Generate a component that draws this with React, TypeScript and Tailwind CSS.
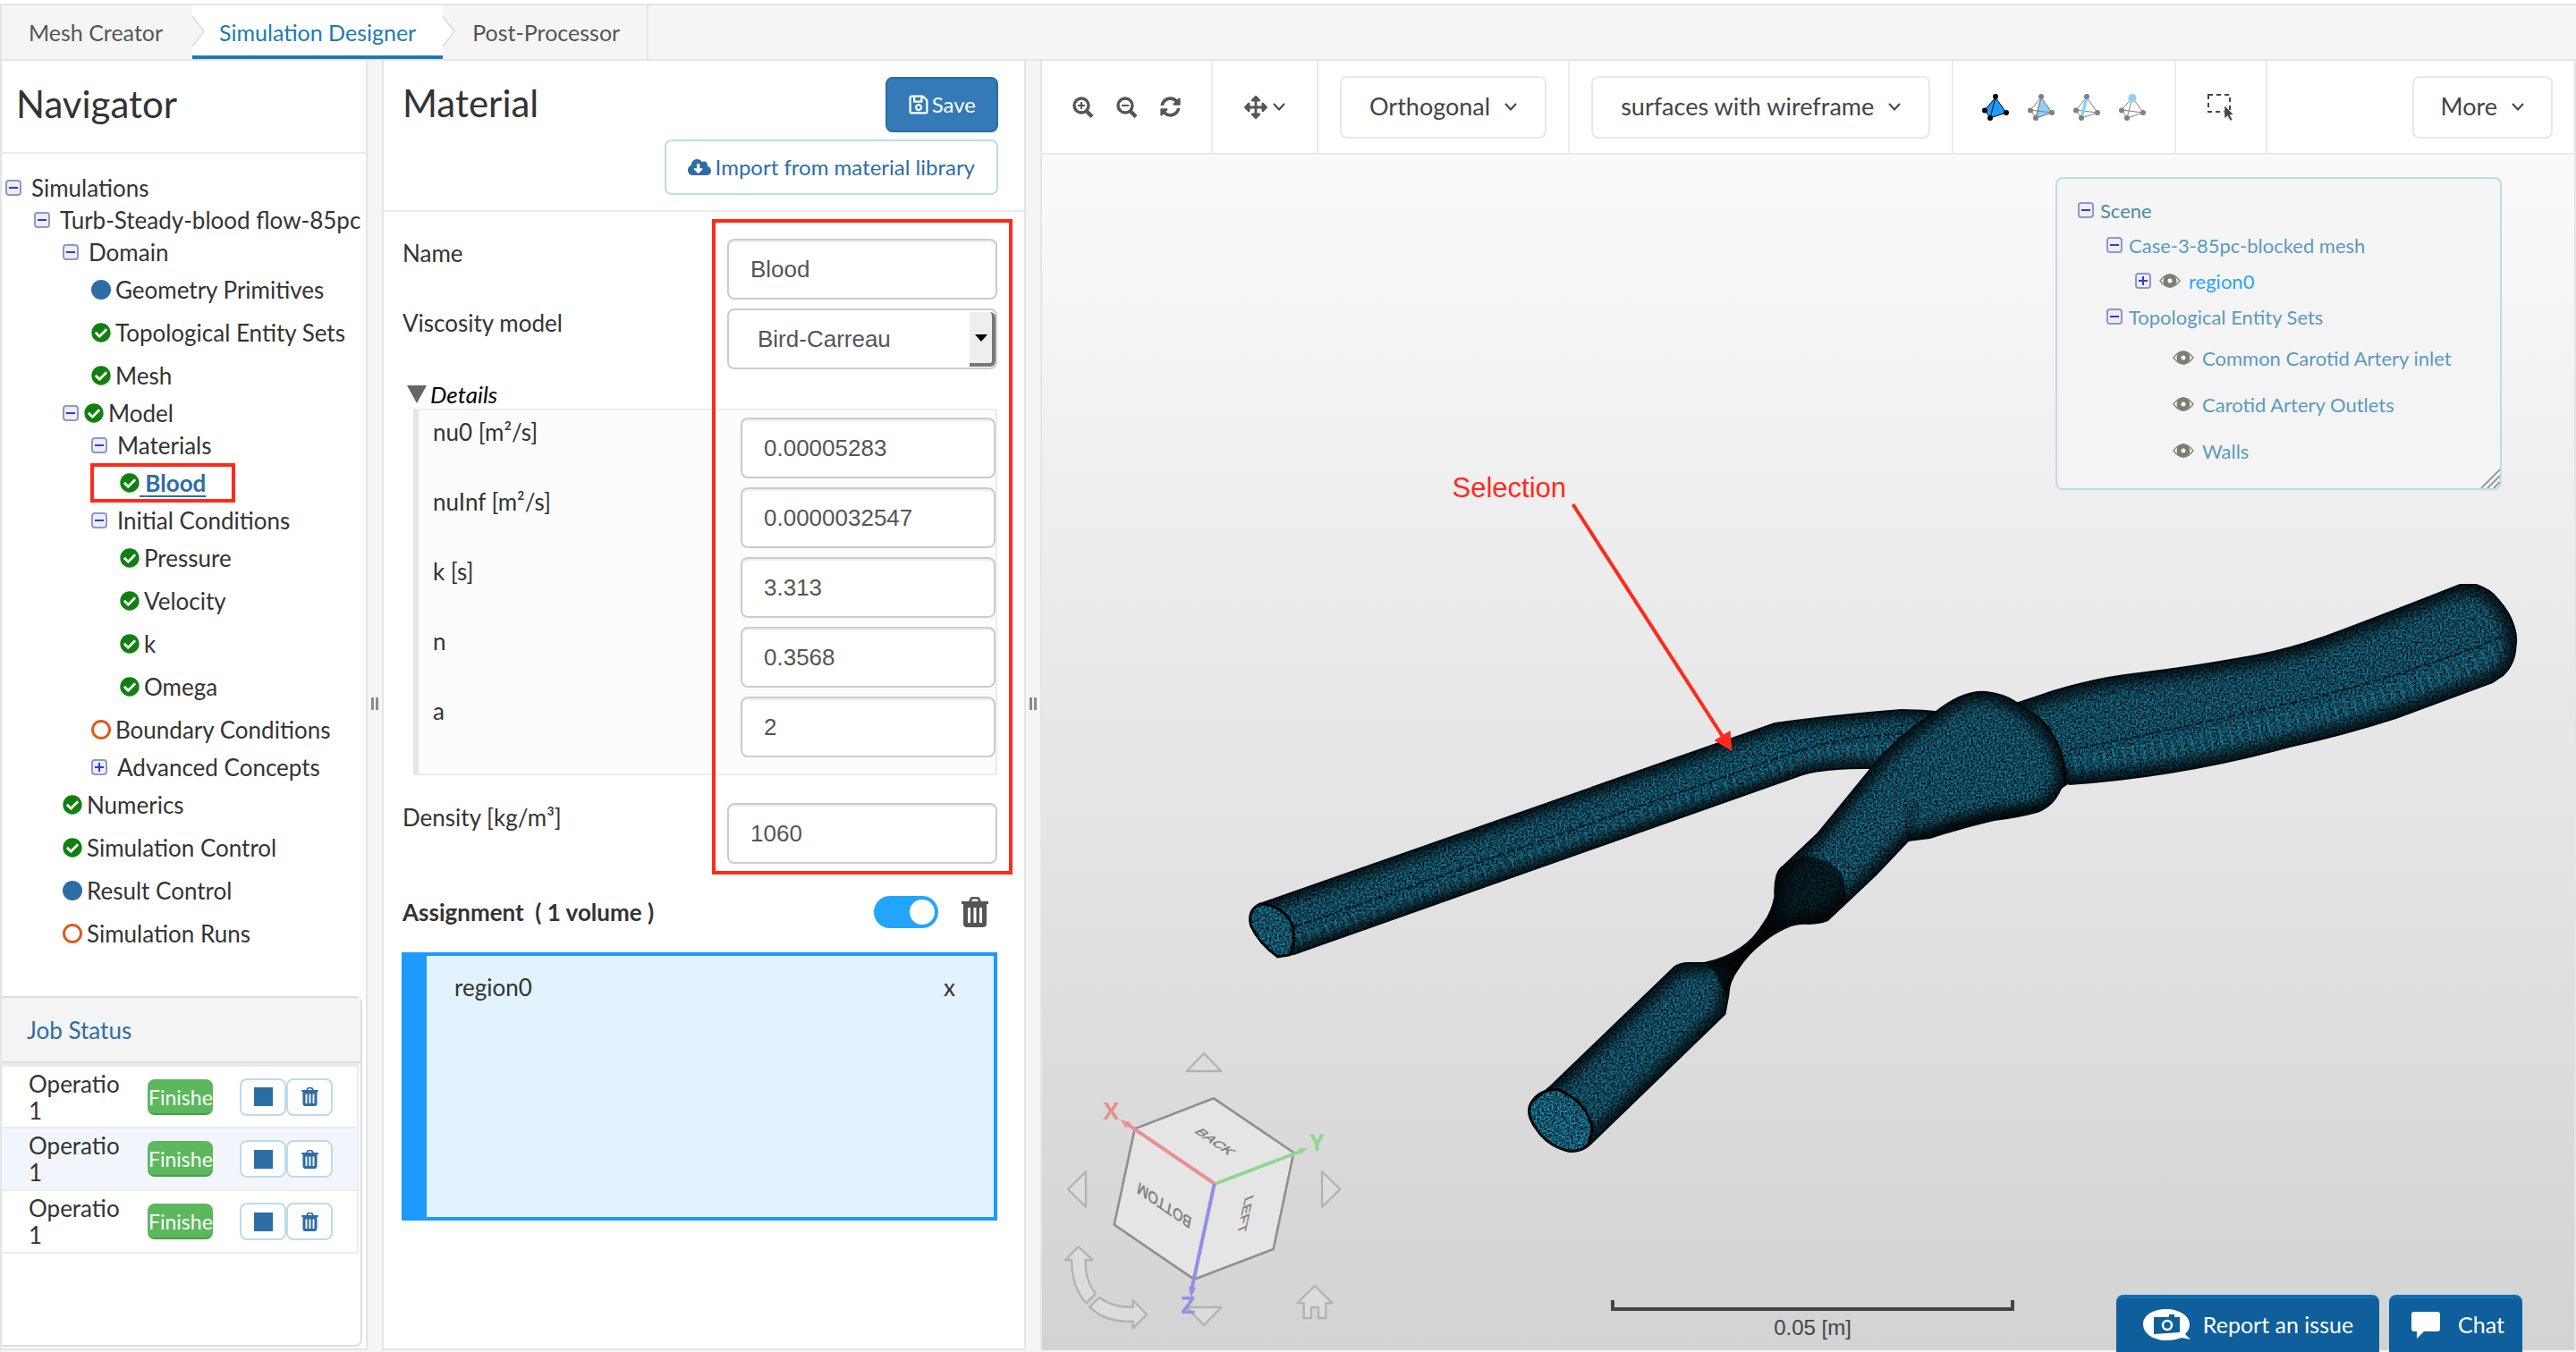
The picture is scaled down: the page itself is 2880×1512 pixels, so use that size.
import type { ReactNode } from "react";
import { FaArrowsAlt, FaCheckCircle, FaCloudDownloadAlt, FaRegSave, FaSyncAlt } from "react-icons/fa";

type TreeItem = {
  label: string;
  level: number;
  toggle?: "minus" | "plus";
  status?: "done" | "info" | "open";
  active?: boolean;
};

const tree: TreeItem[] = [
  { label: "Simulations", level: 0, toggle: "minus" },
  { label: "Turb-Steady-blood flow-85pc", level: 1, toggle: "minus" },
  { label: "Domain", level: 2, toggle: "minus" },
  { label: "Geometry Primitives", level: 3, status: "info" },
  { label: "Topological Entity Sets", level: 3, status: "done" },
  { label: "Mesh", level: 3, status: "done" },
  { label: "Model", level: 2, toggle: "minus", status: "done" },
  { label: "Materials", level: 3, toggle: "minus" },
  { label: "Blood", level: 4, status: "done", active: true },
  { label: "Initial Conditions", level: 3, toggle: "minus" },
  { label: "Pressure", level: 4, status: "done" },
  { label: "Velocity", level: 4, status: "done" },
  { label: "k", level: 4, status: "done" },
  { label: "Omega", level: 4, status: "done" },
  { label: "Boundary Conditions", level: 3, status: "open" },
  { label: "Advanced Concepts", level: 3, toggle: "plus" },
  { label: "Numerics", level: 2, status: "done" },
  { label: "Simulation Control", level: 2, status: "done" },
  { label: "Result Control", level: 2, status: "info" },
  { label: "Simulation Runs", level: 2, status: "open" },
];

const indent = ["pl-1", "pl-9", "pl-17", "pl-25", "pl-33"];

const details = [
  { id: "nu0", label: "nu0 [m²/s]", value: "0.00005283" },
  { id: "nuInf", label: "nuInf [m²/s]", value: "0.0000032547" },
  { id: "k", label: "k [s]", value: "3.313" },
  { id: "n", label: "n", value: "0.3568" },
  { id: "a", label: "a", value: "2" },
];

function Toggle({ kind }: { kind: "minus" | "plus" }) {
  return (
    <button
      aria-label={kind === "minus" ? "Collapse" : "Expand"}
      className="flex size-[18px] shrink-0 items-center justify-center rounded border-2 border-[#8f97cc] bg-[#eceef8]"
    >
      <svg viewBox="0 0 10 10" className="size-[10px]" stroke="#3a36d8" strokeWidth="2">
        <path d="M0 5h10" />
        {kind === "plus" && <path d="M5 0v10" />}
      </svg>
    </button>
  );
}

function Status({ kind }: { kind: "done" | "info" | "open" }) {
  if (kind === "done") return <FaCheckCircle className="size-[22px] shrink-0 text-[#118011]" />;
  if (kind === "info") return <span className="size-[22px] shrink-0 rounded-full bg-[#2e6da4]" />;
  return <span className="size-[22px] shrink-0 rounded-full border-[3px] border-[#de5a1c]" />;
}

function Trash({ className }: { className: string }) {
  return (
    <svg viewBox="0 0 30 34" className={className} fill="currentColor">
      <path
        fillRule="evenodd"
        d="M0 5h8l2-4q.5-1 2-1h6q1.500 0 2 1l2 4h8v3h-2v22q0 4-4 4H6q-4 0-4-4V8H0zM11 5h8l-1.500-2.500h-5zM7 12v17h3V12zm6.500 0v17h3V12zM20 12v17h3V12z"
      />
    </svg>
  );
}

function Chevron() {
  return (
    <svg viewBox="0 0 14 9" className="h-[9px] w-[14px] shrink-0" fill="none" stroke="#444" strokeWidth="2">
      <path d="M1 1l6 6.500L13 1" />
    </svg>
  );
}

function Magnifier({ plus }: { plus?: boolean }) {
  return (
    <svg viewBox="0 0 24 24" className="size-6" fill="none" stroke="#555">
      <circle cx="10" cy="10" r="8" strokeWidth="3.400" />
      <path d="M15.500 16l6.500 6.500" strokeWidth="4.500" />
      <path d="M6 10h8" strokeWidth="2" />
      {plus && <path d="M10 6v8" strokeWidth="2" />}
    </svg>
  );
}

function Tetra({ kind }: { kind: "volume" | "face" | "edge" | "vertex" }) {
  const dot = kind === "volume" ? "#000" : "#808080";
  return (
    <svg viewBox="0 0 30 30" className="size-[30px]" stroke={dot} strokeWidth="1">
      <path d="M15 4L3 18l6 9 18-6z" fill={kind === "volume" ? "#1f9bfb" : "none"} />
      {kind === "face" && <path d="M15 4L9 27l18-6z" fill="#8fd0fb" />}
      <path d={kind === "volume" ? "M15 4L9 27" : "M15 4L9 27M3 18l24 3"} fill="none" />
      {kind === "edge" && <path d="M15 4L9 27" stroke="#8fd0fb" strokeWidth="3.500" />}
      <g fill={dot} stroke="none">
        <circle cx="3" cy="18.500" r="3" />
        <circle cx="9" cy="27" r="3" />
        <circle cx="27" cy="21" r="3" />
        {kind === "vertex" ? <circle cx="15" cy="4.500" r="4.500" fill="#8fd0fb" /> : <circle cx="15" cy="3" r="3" />}
      </g>
    </svg>
  );
}

function Eye() {
  return (
    <svg viewBox="0 0 24 16" className="h-4 w-6 shrink-0">
      <path d="M1 8Q12-6 23 8 12 22 1 8z" fill="#fff" stroke="#85857c" strokeWidth="1.500" />
      <circle cx="12" cy="8" r="5" fill="none" stroke="#7d7d72" strokeWidth="5" />
    </svg>
  );
}

function Field({ id, label, value, nested }: { id: string; label: string; value: string; nested?: boolean }) {
  return (
    <div className="flex justify-between">
      <label htmlFor={id} className="leading-[33px]">
        {label}
      </label>
      <input
        id={id}
        defaultValue={value}
        className={`h-[68px] rounded-lg border-2 border-[#ccc] bg-white px-6 font-['Liberation_Sans',sans-serif] text-[#555] shadow-[inset_0_2px_2px_rgba(0,0,0,0.08)] ${
          nested ? "w-[285px]" : "w-[302px]"
        }`}
      />
    </div>
  );
}

function Navigator() {
  return (
    <aside className="flex w-[411px] shrink-0 flex-col border-x-2 border-b-2 border-[#e5e5e5] bg-white">
      <h1 className="h-[104px] border-b-2 border-[#ececec] px-4 pt-5 text-[42px] leading-[56px]">Navigator</h1>
      <ul className="pt-5">
        {tree.map((item) => (
          <li
            key={item.label}
            className={`relative flex items-center whitespace-nowrap ${item.toggle ? "h-9" : "h-12"} ${indent[item.level]}`}
          >
            {item.toggle && <Toggle kind={item.toggle} />}
            {item.toggle && item.status && <span className="w-[6px] shrink-0" />}
            {item.status && <Status kind={item.status} />}
            {item.active ? (
              <a href="#blood" className="whitespace-pre font-bold text-[#2e6da4] underline underline-offset-4">
                {" "}Blood
              </a>
            ) : (
              <span className={item.status ? "pl-[5px]" : "pl-[11px]"}>{item.label}</span>
            )}
            {item.active && <span className="absolute left-[99px] h-[44px] w-[162px] border-4 border-[#ff2a1c]" />}
          </li>
        ))}
      </ul>

      <section className="mt-auto mr-[4px] mb-[2px] h-[392px] rounded-tr-lg rounded-br-lg border-2 border-l-0 border-[#ddd]">
        <h2 className="h-[73px] border-b-2 border-[#ddd] bg-[#f4f4f4] pl-[28px] leading-[72px] text-[#2e6da4]">
          Job Status
        </h2>
        <table className="mr-1 w-[399px] border-r-2 border-t-4 border-[#ececec]">
          <tbody>
            {[1, 2, 3].map((job) => (
              <tr key={job} className="h-[70px] border-b-2 border-[#ececec] even:bg-[#f2f6fc]">
                <td className="w-[163px] pl-[30px] leading-[30px]">
                  Operatio
                  <br />1
                </td>
                <td className="w-[103px]">
                  <div className="h-10 w-[73px] rounded-lg border-b-2 border-[#4a9e4a] bg-[#5cb85c] pl-px text-[23px] leading-[40px] text-white">
                    Finishe
                  </div>
                </td>
                <td>
                  <div className="flex">
                    <button
                      aria-label="Stop"
                      className="flex h-[42px] w-[52px] items-center justify-center rounded-lg border-2 border-[#bcdcea] bg-white"
                    >
                      <span className="size-[21px] bg-[#2e6da4]" />
                    </button>
                    <button
                      aria-label="Delete"
                      className="flex h-[42px] w-[52px] items-center justify-center rounded-lg border-2 border-[#bcdcea] bg-white text-[#2e6da4]"
                    >
                      <Trash className="h-[21px] w-[19px]" />
                    </button>
                  </div>
                </td>
              </tr>
            ))}
          </tbody>
        </table>
      </section>
    </aside>
  );
}

function Splitter() {
  return (
    <div className="flex w-4 shrink-0 items-center justify-center gap-[2px] pb-1">
      <span className="h-[14px] w-[3px] bg-[#8a8a8a]" />
      <span className="h-[14px] w-[3px] bg-[#8a8a8a]" />
    </div>
  );
}

function Material() {
  return (
    <main className="w-[720px] shrink-0 border-x-2 border-b-2 border-[#e5e5e5] bg-white">
      <header className="flex h-[169px] justify-between border-b-2 border-[#ececec] pt-[18px] pr-[29px] pl-[21px]">
        <h1 className="text-[42px] leading-[58px]">Material</h1>
        <div className="flex flex-col items-end gap-2 text-[24px]">
          <button className="flex h-[62px] items-center gap-[3px] rounded-lg border-2 border-[#2e6da4] bg-[#337ab7] px-[23px] text-white">
            <FaRegSave className="size-6" />
            Save
          </button>
          <button className="flex h-[62px] items-center gap-[5px] rounded-lg border-2 border-[#bcdcea] px-6 text-[#2e6da4]">
            <FaCloudDownloadAlt className="size-[26px]" />
            Import from material library
          </button>
        </div>
      </header>

      <form className="relative pt-[30px] pr-[30px] pl-[21px]">
        <div className="flex flex-col gap-[10px]">
          <Field id="name" label="Name" value="Blood" />
          <div className="flex justify-between">
            <label htmlFor="viscosity" className="leading-[33px]">
              Viscosity model
            </label>
            <div className="relative">
              <select
                id="viscosity"
                className="h-[68px] w-[302px] appearance-none rounded-lg border-2 border-[#ccc] bg-white px-8 font-['Liberation_Sans',sans-serif] text-[#555]"
              >
                <option>Bird-Carreau</option>
              </select>
              <span className="pointer-events-none absolute top-1 right-[2px] flex h-[61px] w-[29px] items-center justify-center rounded-r-md border-r-4 border-b-4 border-[#777] bg-[#eee]">
                <svg viewBox="0 0 14 8" className="h-2 w-[14px]">
                  <path d="M0 0h14L7 8z" />
                </svg>
              </span>
            </div>
          </div>
        </div>

        <button type="button" className="mt-3 flex h-8 items-center gap-1 pl-[5px] leading-[30px] text-black italic">
          <svg viewBox="0 0 22 20" className="h-5 w-[22px]">
            <path d="M0 0h22L11 20z" fill="#666" />
          </svg>
          Details
        </button>
        <div className="ml-3 flex flex-col gap-[10px] border-2 border-l-[6px] border-[#ececec] border-l-[#e6e6e6] bg-[#fcfcfc] pt-2 pb-[18px] pl-4">
          {details.map((field) => (
            <Field key={field.id} {...field} nested />
          ))}
        </div>
        <div className="mt-[31px]">
          <Field id="density" label="Density [kg/m³]" value="1060" />
        </div>
        <div className="pointer-events-none absolute top-[8px] right-[13px] h-[733px] w-[336px] border-4 border-[#ff2a1c]" />
      </form>

      <div className="mt-[34px] flex h-[40px] items-center pr-[40px] pl-[21px]">
        <label htmlFor="assign" className="mr-auto whitespace-pre font-bold">
          Assignment  ( 1 volume )
        </label>
        <input
          id="assign"
          type="checkbox"
          role="switch"
          defaultChecked
          className="mr-[26px] flex h-9 w-[72px] appearance-none items-center justify-end rounded-full bg-[#22a5fd] pr-1 before:size-[28px] before:rounded-full before:bg-white"
        />
        <button aria-label="Delete assignment" className="text-[#555]">
          <Trash className="h-[34px] w-[30px]" />
        </button>
      </div>
      <div className="mt-[25px] mr-[30px] ml-5 flex h-[300px] items-start justify-between border-4 border-l-[28px] border-[#1c9aff] bg-[#e2f3fe] pt-[17px] pr-[43px] pl-[31px] leading-[36px]">
        <span>region0</span>
        <button aria-label="Remove region0">x</button>
      </div>
    </main>
  );
}

function Group({ children }: { children: ReactNode }) {
  return <div className="flex items-center border-r-2 border-[#ececec]">{children}</div>;
}

function Toolbar() {
  return (
    <div className="flex h-[105px] shrink-0 border-b-2 border-[#e8e8e8] bg-white text-[27px] whitespace-nowrap text-[#444]">
      <Group>
        <div className="flex gap-[25px] px-[34px] text-[#555]">
          <button aria-label="Zoom in">
            <Magnifier plus />
          </button>
          <button aria-label="Zoom out">
            <Magnifier />
          </button>
          <button aria-label="Refresh">
            <FaSyncAlt className="size-[23px]" />
          </button>
        </div>
      </Group>
      <Group>
        <button aria-label="Pan" className="flex items-center gap-[6px] px-[35px] text-[#555]">
          <FaArrowsAlt className="size-[26px]" />
          <Chevron />
        </button>
      </Group>
      <Group>
        <button className="mx-6 flex h-[70px] items-center gap-4 rounded-lg border-2 border-[#e8e8e8] px-[31px]">
          Orthogonal
          <Chevron />
        </button>
      </Group>
      <Group>
        <button className="mx-6 flex h-[70px] items-center gap-4 rounded-lg border-2 border-[#e8e8e8] px-[31px]">
          surfaces with wireframe
          <Chevron />
        </button>
      </Group>
      <Group>
        <div className="flex gap-[21px] px-[32px]">
          <button aria-label="Pick volumes">
            <Tetra kind="volume" />
          </button>
          <button aria-label="Pick faces">
            <Tetra kind="face" />
          </button>
          <button aria-label="Pick edges">
            <Tetra kind="edge" />
          </button>
          <button aria-label="Pick nodes">
            <Tetra kind="vertex" />
          </button>
        </div>
      </Group>
      <Group>
        <button aria-label="Box select" className="px-[35px]">
          <svg viewBox="0 0 30 30" className="size-[30px]">
            <path d="M1 1h24v19H1z" fill="none" stroke="#444" strokeWidth="2" strokeDasharray="5 4" />
            <path d="M19 13l10 10-4 .5 3 5.500-2.500 1-3-5.500-3.500 3z" fill="#444" stroke="#fff" strokeWidth=".5" />
          </svg>
        </button>
      </Group>
      <button className="my-auto mr-6 ml-auto flex h-[70px] items-center gap-4 rounded-lg border-2 border-[#e8e8e8] px-[30px]">
        More
        <Chevron />
      </button>
    </div>
  );
}

const mainTube =
  "M2245 790L2296 773Q2345 758 2392 753 2450 746 2500 737 2560 728 2619 705 2680 682 2751 654L2769 654Q2786 660 2793 670 2806 684 2811 700 2815 712 2813 723 2812 743 2799 755L2787 763 2679 803Q2620 822 2560 835 2440 868 2314 877L2290 860z";
const branchTube =
  "M1409 1011L1985 809Q2050 800 2126 794 2150 794 2175 797L2150 860 2092 859Q2045 858 2016 866L1447 1067 1429 1070Q1408 1055 1399 1035 1395 1018 1409 1011z";
const bulb =
  "M2092 860Q2122 822 2164 797 2195 772 2221 774 2240 776 2254 785 2280 800 2290 813 2310 840 2311 877 2304 880 2302 887 2294 902 2278 908 2256 914 2230 917 2192 926 2158 937L2134 940 2098 978 2044 1029Q2034 1033 2023 1033 2010 1032 1998 1037 1984 1043 1972 1053 1954 1067 1944 1083 1933 1098 1933 1112L1929 1134 1778 1280Q1766 1289 1753 1287 1730 1281 1718 1262 1706 1246 1712 1234L1735 1214 1873 1081Q1880 1077 1888 1077L1906 1077Q1930 1072 1947 1060 1962 1050 1972 1033 1982 1020 1985 1002 1984 990 1987 979 1989 972 1995 968L2033 932z";
const branchCap = "M1409 1011Q1436 1012 1446 1036 1449 1056 1442 1068L1429 1070Q1408 1055 1399 1035 1395 1018 1409 1011z";
const bulbCap =
  "M1712 1234Q1722 1217 1744 1219 1776 1234 1781 1263L1776 1281Q1766 1289 1753 1287 1730 1281 1718 1262 1706 1246 1712 1234z";

// Vessel surfaces, painted with a noise filter that stands in for the dense wireframe
function VesselModel() {
  return (
    <svg
      viewBox="1166 173 1712 1337"
      preserveAspectRatio="xMidYMid meet"
      className="pointer-events-none absolute inset-0 size-full"
      role="img"
      aria-label="Blocked carotid artery mesh"
    >
      <defs>
        <filter id="mesh" x="0" y="0" width="100%" height="100%" colorInterpolationFilters="sRGB">
          <feTurbulence type="fractalNoise" baseFrequency="0.45" numOctaves="2" seed="4" />
          <feColorMatrix values="0 0 0 0 0  0 0 0 0 0  0 0 0 0 0  2 0 0 0 -0.6" />
          <feComposite in2="SourceAlpha" operator="in" result="dark" />
          <feMerge>
            <feMergeNode in="SourceGraphic" />
            <feMergeNode in="dark" />
          </feMerge>
        </filter>
        <filter id="soft" x="-5%" y="-5%" width="110%" height="110%">
          <feGaussianBlur stdDeviation="7" />
        </filter>
        <clipPath id="clipMain">
          <path d={mainTube} />
        </clipPath>
        <clipPath id="clipBranch">
          <path d={branchTube} />
        </clipPath>
        <clipPath id="clipBulb">
          <path d={bulb} />
        </clipPath>
      </defs>

      <g clipPath="url(#clipBranch)">
        <g filter="url(#mesh)">
          <path d={branchTube} fill="#177494" />
        </g>
        <path
          d="M1452 1051L2010 852Q2060 836 2130 838"
          fill="none"
          stroke="#2aa0c8"
          strokeWidth="14"
          strokeDasharray="3 8"
          opacity=".3"
        />
        <path d={branchTube} fill="none" stroke="#000" strokeWidth="16" opacity=".85" filter="url(#soft)" />
        <path
          d="M1447 1037L2010 840Q2060 823 2140 820"
          fill="none"
          stroke="#04141b"
          strokeWidth="2"
          strokeDasharray="9 3"
          opacity=".8"
        />
      </g>
      <g filter="url(#mesh)">
        <path d={branchCap} fill="#1a83a8" />
      </g>
      <path d={branchCap} fill="none" stroke="#000" strokeWidth="3" />
      <path d={branchTube} fill="none" stroke="#02090c" strokeWidth="2" />

      <g clipPath="url(#clipMain)">
        <g filter="url(#mesh)">
          <path d={mainTube} fill="#177494" />
        </g>
        <path
          d="M2320 856Q2460 832 2600 798 2710 768 2806 725"
          fill="none"
          stroke="#2aa0c8"
          strokeWidth="22"
          strokeDasharray="3 8"
          opacity=".28"
        />
        <path d={mainTube} fill="none" stroke="#000" strokeWidth="22" opacity=".75" filter="url(#soft)" />
        <path
          d="M2314 839Q2450 812 2589 780 2700 752 2811 707"
          fill="none"
          stroke="#04141b"
          strokeWidth="2"
          strokeDasharray="9 3"
          opacity=".8"
        />
      </g>
      <path d={mainTube} fill="none" stroke="#02090c" strokeWidth="2" />

      <g clipPath="url(#clipBulb)">
        <g filter="url(#mesh)">
          <path d={bulb} fill="#177494" />
        </g>
        <path d={bulb} fill="none" stroke="#000" strokeWidth="20" opacity=".8" filter="url(#soft)" />
        <path d="M2134 940Q2190 905 2290 900L2278 925 2134 945z" fill="#000" opacity=".6" filter="url(#soft)" />
        <path d="M2134 940Q2126 920 2144 900" fill="none" stroke="#000" strokeWidth="6" opacity=".7" filter="url(#soft)" />
        {/* stenosis, where the elements get too fine to tell apart */}
        <path
          d="M1995 966L2020 957Q2052 962 2062 982L2066 1012 2044 1040 1985 1060 1944 1135 1926 1105Q1920 1085 1902 1070L1950 1040 1975 990z"
          fill="#000"
          opacity=".65"
        />
        <path d="M2311 877Q2312 830 2285 806" fill="none" stroke="#000" strokeWidth="7" />
      </g>
      <g filter="url(#mesh)">
        <path d={bulbCap} fill="#1d8fb6" />
      </g>
      <path d={bulbCap} fill="none" stroke="#000" strokeWidth="3" />
      <path d={bulb} fill="none" stroke="#02090c" strokeWidth="2" />

      <path d="M1759 564L1928 826" stroke="#ff2a1c" strokeWidth="4" />
      <path d="M1937 840L1917 828 1935 817z" fill="#ff2a1c" />
      <text x="1624" y="556" fontSize="31" fill="#ff2a1c" className="font-['Liberation_Sans',sans-serif]">
        Selection
      </text>
    </svg>
  );
}

function ViewCube() {
  return (
    <svg
      viewBox="0 0 1200 1056"
      className="absolute -bottom-[2px] -left-1 h-[352px] w-[400px]"
      role="img"
      aria-label="View cube"
    >
      <g fill="#dcdcdc" stroke="#b2b2b2" strokeWidth="7" strokeLinejoin="round">
        <path d="M555 54L613 114H497z" />
        <path d="M555 966L613 906H497z" />
        <path d="M99 510L159 451V569z" />
        <path d="M1012 510L951 451V569z" />
        <path d="M134 703L182 747H158Q156 816 192 860L160 892Q110 835 112 747H90z" />
        <path d="M204 873Q246 906 317 906V882L363 930 317 976V953Q225 958 172 905z" />
        <path d="M927 834L986 892H964V942H939V906H915V942H890V892H868z" />
      </g>
      <path
        d="M588 205L323 307 254 629 522 812 788 711 856 387z"
        fill="#e5e5e5"
        stroke="#909090"
        strokeWidth="8"
        strokeLinejoin="round"
      />
      <path d="M592 492L300 293" stroke="#e89090" strokeWidth="12" />
      <path d="M274 277l34 8-14 20z" fill="#e89090" />
      <path d="M592 492L876 384" stroke="#90d690" strokeWidth="12" />
      <path d="M904 373l-26 20-6-20z" fill="#90d690" />
      <path d="M590 492L515 840" stroke="#9090e8" strokeWidth="12" />
      <path d="M511 872l-7-36 24 4z" fill="#9090e8" />
      <g
        fontSize="60"
        fill="#808080"
        stroke="#808080"
        strokeWidth="2"
        textAnchor="middle"
        className="font-['Liberation_Sans',sans-serif]"
      >
        <text transform="matrix(.7 .48 -.69 .274 578 356)">BACK</text>
        <text transform="matrix(-.7 -.48 .183 -.836 426 547)">BOTTOM</text>
        <text transform="matrix(-.183 .836 -.69 .274 680 600)">LEFT</text>
      </g>
      <g fontSize="80" fontWeight="700" textAnchor="middle" className="font-['Open_Sans',sans-serif]">
        <text x="244" y="276" fill="#e89090">X</text>
        <text x="934" y="381" fill="#90d690">Y</text>
        <text x="502" y="928" fill="#9090e8">Z</text>
      </g>
    </svg>
  );
}

function SceneTree() {
  return (
    <div className="absolute top-[25px] right-[81px] h-[350px] w-[499px] rounded-lg border-2 border-[#bcdcea] bg-[#f4f4f4]/90 pt-4 text-[22px] text-[#5a9bbd]">
      <ul>
        <li className="flex h-[38px] items-center gap-[7px] pl-[23px] text-[#4a8aa8]">
          <Toggle kind="minus" /> Scene
        </li>
        <li className="flex h-10 items-center gap-[7px] pl-[55px]">
          <Toggle kind="minus" /> Case-3-85pc-blocked mesh
        </li>
        <li className="flex h-10 items-center gap-[9px] pl-[87px] text-[#2aa5fb]">
          <Toggle kind="plus" />
          <Eye /> region0
        </li>
        <li className="flex h-10 items-center gap-[7px] pl-[55px]">
          <Toggle kind="minus" /> Topological Entity Sets
        </li>
        {["Common Carotid Artery inlet", "Carotid Artery Outlets", "Walls"].map((name) => (
          <li key={name} className="flex h-[52px] items-center gap-[9px] pl-[129px]">
            <Eye /> {name}
          </li>
        ))}
      </ul>
      <svg viewBox="0 0 22 22" className="absolute right-0 bottom-0 size-[22px]" stroke="#999" strokeWidth="2">
        <path d="M1 22L22 1M8 22L22 8M15 22l7-7" />
      </svg>
    </div>
  );
}

function Viewer() {
  return (
    <section className="flex min-w-0 flex-1 flex-col border-x-2 border-[#e5e5e5]">
      <Toolbar />
      <div className="relative flex-1 bg-linear-to-b from-[#fafafa] to-[#d3d3d3]">
        <VesselModel />
        <ViewCube />
        <SceneTree />
        <div className="absolute bottom-[11px] left-[636px] w-[451px] text-center font-['Liberation_Sans',sans-serif] text-[24px] leading-[28px] text-[#444]">
          <div className="mb-[5px] h-3 border-4 border-t-0 border-[#444]" />
          0.05 [m]
        </div>
      </div>
    </section>
  );
}

export default function App() {
  return (
    <div className="relative flex h-screen flex-col overflow-hidden bg-[#f5f5f5] font-['Lato',sans-serif] text-[26px] text-[#333]">
      <nav className="flex h-[68px] shrink-0 border-t-4 border-b-2 border-t-white border-b-[#e5e5e5] text-[25px] leading-[60px]">
        <a href="#mesh" className="border-t-2 border-l-2 border-[#e5e5e5] pr-[33px] pl-[30px] text-[#555]">
          Mesh Creator
        </a>
        <a
          href="#simulation"
          className="relative border-t-2 border-b-4 border-[#e5e5e5] border-b-[#1a7bb3] bg-white px-[30px] text-[#1a7bb3]"
        >
          <svg viewBox="0 0 14 34" className="absolute top-3 left-0 h-[34px] w-[14px]">
            <path d="M0 0l13 17L0 34" fill="#f5f5f5" stroke="#e0e0e0" strokeWidth="2" />
          </svg>
          Simulation Designer
        </a>
        <a href="#post" className="relative border-t-2 border-r-2 border-[#e5e5e5] pr-[30px] pl-[33px] text-[#555]">
          <svg viewBox="0 0 14 34" className="absolute top-3 left-0 h-[34px] w-[14px]">
            <path d="M0 0l13 17L0 34" fill="#fff" stroke="#e0e0e0" strokeWidth="2" />
          </svg>
          Post-Processor
        </a>
        <span className="flex-1 border-t-2 border-[#e5e5e5]" />
      </nav>

      <div className="flex min-h-0 flex-1 pb-[2px]">
        <Navigator />
        <Splitter />
        <Material />
        <Splitter />
        <Viewer />
      </div>

      <div className="absolute right-[60px] bottom-0 flex gap-[11px] text-[25px] text-white">
        <button className="flex h-16 items-center gap-[14px] rounded-t-lg border-t-4 border-[#0a6fb5] bg-[#0e5f9b] px-[29px]">
          <svg viewBox="0 0 54 36" className="h-9 w-[54px]">
            <path d="M27 0c15 0 26 8 26 17 0 5-2 8-5 11l6 6-10-2c-5 2-10 3-17 3C12 35 1 27 1 17S12 0 27 0z" fill="#fff" />
            <path d="M13 9h17V6h6v3h6v17l-29 2z" fill="#0e5f9b" />
            <circle cx="28" cy="18" r="5" fill="none" stroke="#fff" strokeWidth="2.500" />
          </svg>
          Report an issue
        </button>
        <button className="flex h-16 items-center gap-5 rounded-t-lg border-t-4 border-[#0a6fb5] bg-[#0e5f9b] pr-[20px] pl-[25px]">
          <svg viewBox="0 0 32 30" className="h-[30px] w-8" fill="#fff">
            <path d="M3 0h26q3 0 3 3v16q0 3-3 3H14l-8 8v-8H3q-3 0-3-3V3q0-3 3-3z" />
          </svg>
          Chat
        </button>
      </div>
    </div>
  );
}
